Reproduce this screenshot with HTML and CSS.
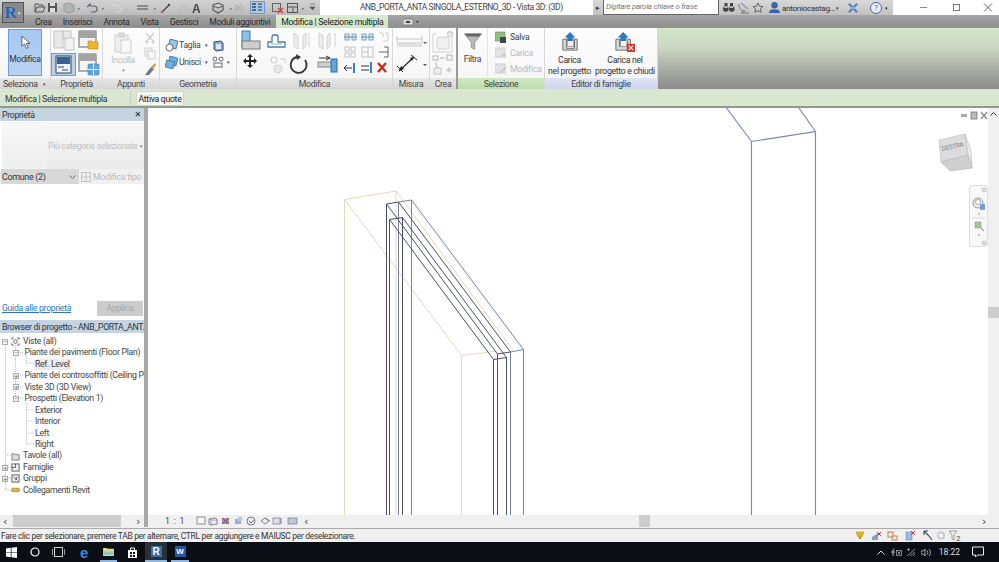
FILE: index.html
```html
<!DOCTYPE html>
<html lang="it">
<head>
<meta charset="utf-8">
<title>Revit</title>
<link rel="stylesheet" href="styles.css">
</head>
<body>
<div class="app">
  <header class="titlebar">
    <div class="qat">
      <button class="appbtn"><span class="appbtn-r">R</span><span class="appbtn-c">▾</span></button>
      <svg class="qat-icons" viewBox="30 0 290 15" width="290" height="15">
        <path d="M35 4h3l1 1h4v2M35 12V4 M35 12l2-5h8l-2 5z" fill="none" stroke="#555" stroke-width="1"/>
        <rect x="48" y="3" width="9" height="9" fill="#555"/><rect x="50" y="3" width="5" height="3" fill="#ddd"/><rect x="50" y="8" width="5" height="4" fill="#ddd"/>
        <path d="M64 4l5-1 5 2v6l-5 2-5-2z" fill="#aeb4b4" stroke="#999"/>
        <path d="M78 8h1.500v1.500h-1.500z" fill="#666"/>
        <path d="M87 7l3-3v2h4a3 3 0 0 1 0 6h-3" fill="none" stroke="#667" stroke-width="1.200"/>
        <path d="M102 8h1.500v1.500h-1.500z" fill="#666"/>
        <path d="M111 7l3-3v2h4a3 3 0 0 1 0 6h-3" fill="none" stroke="#d6d6d6" stroke-width="1.200"/>
        <path d="M126 8h1.500v1.500h-1.500z" fill="#bbb"/>
        <path d="M137 6h11M137 9h11" stroke="#777" stroke-width="1.500"/><path d="M154 8h1.500v1.500h-1.500z" fill="#666"/>
        <path d="M162 12l7-7" stroke="#444" stroke-width="1.300"/><circle cx="162" cy="12" r="1.200" fill="#c55"/><circle cx="169" cy="5" r="1.200" fill="#444"/>
        <path d="M178 12l3-3a3 3 0 1 1 2 2l-3 2z" fill="none" stroke="#b4b4b4"/>
        <text x="192" y="12.500" class="qat-a">A</text>
        <path d="M213 5l5-2 5 2v5l-5 3-5-3z" fill="none" stroke="#555" stroke-width="1.100"/><path d="M213 6l5 2 5-2" fill="none" stroke="#555"/>
        <path d="M230 8h1.500v1.500h-1.500z" fill="#666"/>
        <path d="M236 5l4 3-4 3z M240 4l3 4-3 4" fill="none" stroke="#aaa"/>
        <rect x="250.500" y="1.500" width="14" height="12" fill="#a8c8ec" stroke="#6c9bd4"/>
        <path d="M252 4h4M252 7h4M252 10h4" stroke="#345" stroke-width="1.300"/><path d="M258 4h4M258 7h4M258 10h4" stroke="#567" stroke-width="1.300"/>
        <rect x="272.500" y="3.500" width="8" height="8" fill="none" stroke="#666"/><path d="M278 8l5 5M283 8l-5 5" stroke="#d33" stroke-width="1.400"/>
        <rect x="287.500" y="3.500" width="10" height="9" fill="none" stroke="#555"/><path d="M288 7h10M293 7v5" stroke="#555"/>
        <path d="M302 8h1.500v1.500h-1.500z" fill="#666"/>
        <path d="M310 4h5M310 7l2.500 3 2.500-3z" fill="#555" stroke="#555" stroke-width=".6"/>
      </svg>
    </div>
    <div class="doc-title">ANB_PORTA_ANTA SINGOLA_ESTERNO_3D - Vista 3D: (3D)</div>
    <div class="infocenter">
      <span class="ic-play">▸</span>
      <span class="ic-search">Digitare parola chiave o frase</span>
      <svg viewBox="0 0 46 15" width="46" height="15" class="ic-icons">
        <path d="M3 9a2.800 2.800 0 1 0 5.600 0a2.800 2.800 0 1 0-5.600 0M9 9a2.800 2.800 0 1 0 5.600 0a2.800 2.800 0 1 0-5.600 0M4.500 3h3v5h-3zM10 3h3v5h-3z" fill="#444"/>
        <path d="M19 4a6 6 0 0 0 7 7M21 3l7 6M24 11l-3 2h8" fill="none" stroke="#778" stroke-width="1"/>
        <path d="M38 3l1.500 3.200 3.500.4-2.600 2.300.7 3.500-3.100-1.800-3.100 1.800.7-3.500-2.600-2.300 3.500-.4z" fill="none" stroke="#666"/>
      </svg>
      <svg viewBox="0 0 12 14" width="11" height="13" class="ic-user"><circle cx="6" cy="4.500" r="3.500" fill="#3b64a8"/><path d="M0 13c0-3 2-4 6-4s6 1 6 4z" fill="#3b64a8"/></svg>
      <span class="ic-name">antoniocastag...</span><span class="ic-caret">▾</span>
      <svg viewBox="0 0 12 12" width="10" height="10" class="ic-x"><path d="M1 1l10 10M11 1L1 11" stroke="#5a82b8" stroke-width="2.600"/><path d="M3 6h6" stroke="#9ab8dc" stroke-width="2"/></svg>
      <span class="ic-help">?</span><span class="ic-caret ic-caret-help">▾</span>
    </div>
    <div class="winctl">
      <svg viewBox="0 0 106 15" width="106" height="15">
        <path d="M27 7.500h7" stroke="#888"/><rect x="60.500" y="4.500" width="6" height="6" fill="none" stroke="#777"/>
        <path d="M91 3.500l8 8M99 3.500l-8 8" stroke="#666"/>
      </svg>
    </div>
  </header>

  <nav class="tabs">
    <span class="tab tab-crea">Crea</span>
    <span class="tab">Inserisci</span>
    <span class="tab">Annota</span>
    <span class="tab">Vista</span>
    <span class="tab">Gestisci</span>
    <span class="tab">Moduli aggiuntivi</span>
    <span class="tab-active">Modifica | Selezione multipla</span>
    <svg class="tab-extra" viewBox="0 0 16 8" width="16" height="8"><rect x="0" y="1" width="10" height="6" rx="1" fill="#d8d8d8" stroke="#666" stroke-width=".6"/><rect x="3" y="3" width="4" height="2" fill="#444"/><path d="M13 3h3l-1.500 2z" fill="#333"/></svg>
  </nav>

  <section class="ribbon">
    <div class="panel p-sel">
      <div class="panel-body">
        <button class="big-active">
          <svg viewBox="0 0 12 16" width="11" height="15"><path d="M2 1v11l3-2.500 2 5 2-1-2-4.500h4z" fill="#fff" stroke="#556" stroke-width="1"/></svg>
          <span>Modifica</span>
        </button>
      </div>
      <div class="panel-label label-left">Seleziona <i class="lab-caret">▾</i></div>
    </div>

    <div class="panel p-prop">
      <div class="panel-body">
        <svg viewBox="51 28 52 50" width="52" height="50">
          <g fill="#e8e8e8" stroke="#c4c4c4"><rect x="54" y="31" width="9" height="17"/><rect x="63" y="31" width="8" height="8"/><rect x="65" y="38" width="9" height="12" fill="#f2f2f2"/></g>
          <rect x="79" y="31" width="17" height="16" fill="#f4f4f4" stroke="#666"/><rect x="79" y="31" width="17" height="7" fill="#a4a4a4"/>
          <path d="M88 41h4l1 1h5v7H88z" fill="#f0b32a" stroke="#b88a20" stroke-width=".6"/>
          <rect x="51.500" y="53.500" width="24" height="22" fill="#b5d0ef" stroke="#6f9fd8"/>
          <rect x="56" y="56" width="15" height="17" fill="#eef3f9" stroke="#345"/><rect x="57" y="57" width="13" height="7" fill="#3a5f95"/><path d="M58 67h6M62 70h6" stroke="#345"/>
          <rect x="79" y="54" width="17" height="17" fill="#f4f4f4" stroke="#666"/><rect x="79" y="54" width="17" height="7" fill="#a4a4a4"/>
          <rect x="88" y="64" width="11" height="11" rx="1" fill="#5ea6df" stroke="#3a7cb5" stroke-width=".6"/><path d="M93.500 64v11M88 69.500h11" stroke="#fff"/>
        </svg>
      </div>
      <div class="panel-label">Proprietà</div>
    </div>

    <div class="panel p-app">
      <div class="panel-body p-app-body">
        <div class="paste">
          <svg viewBox="0 0 18 22" width="18" height="22"><rect x="1" y="3" width="13" height="17" fill="#eee" stroke="#d0d0d0"/><rect x="5" y="1" width="5" height="4" fill="#ddd" stroke="#d0d0d0"/><rect x="7" y="8" width="10" height="13" fill="#f8f8f8" stroke="#d0d0d0"/></svg>
          <span>Incolla</span>
          <i class="caret-dim">▾</i>
        </div>
        <svg class="app-small" viewBox="0 0 12 44" width="12" height="44">
          <path d="M2 1l8 9M10 1L2 10" stroke="#ccc" stroke-width="1.400"/><circle cx="3" cy="10" r="1.500" fill="#d0d0d0"/><circle cx="9" cy="10" r="1.500" fill="#d0d0d0"/>
          <rect x="1" y="16" width="7" height="8" fill="#eee" stroke="#d0d0d0"/><rect x="4" y="19" width="7" height="8" fill="#f6f6f6" stroke="#d0d0d0"/>
          <path d="M1 43l6-8 3 2-5 6z" fill="#778"/><path d="M7 35l4-4 1 2-3 4z" fill="#c9a23f"/>
        </svg>
      </div>
      <div class="panel-label">Appunti</div>
    </div>

    <div class="panel p-geo">
      <div class="panel-body geo-body">
        <div class="geo-row">
          <svg viewBox="0 0 13 13" width="13" height="13"><rect x="4" y="1" width="8" height="8" fill="#9cc4e6" stroke="#4c7fa8" transform="rotate(15 8 5)"/><circle cx="4.500" cy="8.500" r="3.500" fill="#fff" stroke="#666"/></svg>
          <span>Taglia</span><i class="geo-caret">▾</i>
          <svg class="geo-ic" viewBox="0 0 12 12" width="12" height="12"><path d="M2 2l7-1 2 2v7l-7 1-2-2z" fill="#7fb0de" stroke="#446"/><path d="M4 4h5v5H4z" fill="#dce9f6"/></svg>
        </div>
        <div class="geo-row">
          <svg viewBox="0 0 13 13" width="13" height="13"><rect x="4" y="1" width="8" height="8" fill="#6fb0e2" stroke="#4c7fa8" transform="rotate(15 8 5)"/><rect x="1" y="5" width="8" height="7" fill="#6fb0e2" stroke="#4c7fa8" transform="rotate(15 5 8)"/></svg>
          <span>Unisci</span><i class="geo-caret">▾</i>
          <svg class="geo-ic" viewBox="0 0 12 12" width="12" height="12"><circle cx="3" cy="3" r="2" fill="none" stroke="#666"/><circle cx="9" cy="3" r="2" fill="none" stroke="#666"/><rect x="2" y="7" width="8" height="4" fill="none" stroke="#666"/></svg>
          <i class="geo-caret">▾</i>
        </div>
      </div>
      <div class="panel-label">Geometria</div>
    </div>

    <div class="panel p-mod">
      <div class="panel-body">
        <svg viewBox="237 28 156 50" width="156" height="50">
          <rect x="242" y="31" width="8" height="16" fill="#8fc0e8" stroke="#3c7fb5"/><rect x="242" y="41" width="18" height="8" fill="#cfcfcf" stroke="#777"/>
          <path d="M268 47v-5h4v-5c0-3 6-3 6 0v5h7v5z" fill="#fff" stroke="#4c7fa8" stroke-width="1.300"/><path d="M271 44h11" stroke="#aaa"/>
          <path d="M294 33l4 3v13l-4-3zM306 33l-3 3v13l3-3zM309 33v14" fill="#eee" stroke="#d0d0d0"/>
          <path d="M319 33l4 3v13l-4-3zM330 33l-3 3v13l3-3z" fill="#eee" stroke="#d0d0d0"/><path d="M335 33v14" stroke="#d0d0d0"/>
          <path d="M250 54l3 3h-2v3h3v-2l3 3-3 3v-2h-3v3h2l-3 3-3-3h2v-3h-3v2l-3-3 3-3v2h3v-3h-2z" fill="#222"/>
          <circle cx="274" cy="60" r="3" fill="none" stroke="#d0d0d0" stroke-width="1.200"/><circle cx="278" cy="69" r="4" fill="#e8e8e8" stroke="#d0d0d0"/><path d="M280 59h5v4" fill="none" stroke="#d0d0d0"/>
          <path d="M297 57a8 8 0 1 0 8 3" fill="none" stroke="#333" stroke-width="1.800"/><path d="M296 54l5 3-4 3z" fill="#333"/>
          <rect x="318" y="62" width="16" height="5" fill="#cfcfcf" stroke="#888"/><rect x="331" y="59" width="6" height="13" fill="#5fa4dc" stroke="#2f6da3"/><path d="M319 58h11M326 56l4 2-4 2" fill="none" stroke="#333"/>
          <g fill="#dce8f3" stroke="#5f96c4" stroke-width=".8"><rect x="345" y="34" width="4" height="6"/><rect x="352" y="34" width="4" height="6"/><rect x="362" y="34" width="4" height="6"/><rect x="369" y="34" width="4" height="6"/></g>
          <path d="M344 37h13M361 37h13" stroke="#578" stroke-width=".8"/>
          <path d="M379 33h4v4M385 33h3v8h-5" fill="none" stroke="#ccc"/>
          <g fill="none" stroke="#c4c4c4"><rect x="345" y="47" width="4" height="4"/><rect x="351" y="47" width="4" height="4"/><rect x="345" y="53" width="4" height="4"/><rect x="351" y="53" width="4" height="4"/><rect x="362" y="47" width="11" height="10"/><path d="M368 47v10M362 52h6"/></g>
          <path d="M379 52h9M384 47h4v10h-4" fill="none" stroke="#666"/>
          <path d="M345 68h7M347 65l-3 3 3 3" fill="none" stroke="#334"/><rect x="353" y="63" width="2" height="10" fill="#3c7fb5"/>
          <path d="M361 66h8M361 70h8" fill="none" stroke="#334"/><rect x="370" y="62" width="2" height="11" fill="#3c7fb5"/>
          <path d="M378 63l8 9M386 63l-8 9" stroke="#cf2a20" stroke-width="2.400"/>
        </svg>
      </div>
      <div class="panel-label">Modifica</div>
    </div>

    <div class="panel p-mis">
      <div class="panel-body">
        <svg viewBox="393 28 37 50" width="37" height="50">
          <path d="M397 39h25M397 36v6M422 36v6" stroke="#c4c4c4" fill="none"/><rect x="397" y="42" width="25" height="5" fill="#e0e0e0"/>
          <path d="M423 42h4l-2 2z" fill="#555"/>
          <path d="M399 71l15-14" stroke="#222" stroke-width="1.200"/><path d="M399 71l2-5 3 3zM414 57l-4 1 2 3z" fill="#222"/><path d="M397 66l6 6M411 55l6 5" stroke="#222"/>
          <path d="M423 64h4l-2 2z" fill="#555"/>
        </svg>
      </div>
      <div class="panel-label">Misura</div>
    </div>

    <div class="panel p-crea">
      <div class="panel-body">
        <svg viewBox="430 28 28 50" width="28" height="50">
          <path d="M436 34h-3v18h3M447 33h5v19h-16" fill="none" stroke="#dcdcdc" stroke-width="1.300"/><rect x="437" y="37" width="12" height="12" rx="2" fill="#f0f0f0" stroke="#d4d4d4"/><circle cx="450" cy="34" r="2.500" fill="none" stroke="#c4c4c4"/>
          <rect x="433" y="56" width="5" height="4" fill="none" stroke="#b4b4b4"/><path d="M440 58h5" stroke="#b4b4b4"/><rect x="447" y="55" width="5" height="5" fill="none" stroke="#b4b4b4"/><path d="M436 62v4l3 2" fill="none" stroke="#b4b4b4"/><rect x="434" y="68" width="7" height="6" fill="#eee" stroke="#c4c4c4"/><path d="M449 67l3 3-3 3-3-3z" fill="#d0d0d0"/>
        </svg>
      </div>
      <div class="panel-label">Crea</div>
    </div>

    <div class="panel p-filt">
      <div class="panel-body filt-body">
        <div class="filter-btn">
          <svg viewBox="0 0 20 20" width="18" height="17"><path d="M0 1h20L12 11v8l-4-2v-6z" fill="#b9b9b9" stroke="#888"/><path d="M0 1h20l-3 3H3z" fill="#666"/></svg>
          <span>Filtra</span>
        </div>
        <div class="sel-list">
          <div class="sel-item"><svg viewBox="0 0 12 12" width="12" height="12"><rect x="0" y="1" width="10" height="9" fill="#8fc083" stroke="#777" stroke-width=".6"/><rect x="5" y="6" width="6" height="6" fill="#444"/></svg><span>Salva</span></div>
          <div class="sel-item dim"><svg viewBox="0 0 12 12" width="12" height="12"><rect x="0" y="1" width="10" height="9" fill="#e2e2e2" stroke="#d0d0d0"/><path d="M6 8h5M9 6v5" stroke="#c4c4c4"/></svg><span>Carica</span></div>
          <div class="sel-item dim"><svg viewBox="0 0 12 12" width="12" height="12"><rect x="0" y="1" width="10" height="9" fill="#e2e2e2" stroke="#d0d0d0"/><path d="M5 10l6-6" stroke="#c4c4c4" stroke-width="1.500"/></svg><span>Modifica</span></div>
        </div>
      </div>
      <div class="panel-label label-green">Selezione</div>
    </div>

    <div class="panel p-edit">
      <div class="panel-body edit-body">
        <div class="load-btn load-1">
          <svg viewBox="0 0 20 22" width="18" height="20"><path d="M2 8h4v10h9V8h3v12H2z" fill="#d9d9d9" stroke="#666"/><rect x="7" y="7" width="7" height="9" fill="#f2f2f2" stroke="#999"/><path d="M10 0l6 6h-3v4H7V6H4z" fill="#2c78c4"/></svg>
          <span>Carica<br>nel progetto</span>
        </div>
        <div class="load-btn load-2">
          <svg viewBox="0 0 24 22" width="22" height="20"><path d="M2 8h4v8h9V8h3v12H2z" fill="#d9d9d9" stroke="#666"/><rect x="7" y="7" width="7" height="9" fill="#f2f2f2" stroke="#999"/><path d="M10 0l6 6h-3v4H7V6H4z" fill="#2c78c4"/><rect x="14" y="13" width="9" height="9" fill="#d9352a"/><path d="M16 15l5 5M21 15l-5 5" stroke="#fff" stroke-width="1.200"/></svg>
          <span>Carica nel<br>progetto e chiudi</span>
        </div>
      </div>
      <div class="panel-label label-blue">Editor di famiglie</div>
    </div>
    <div class="ribbon-rest"></div>
  </section>

  <div class="optbar">
    <span class="opt-title">Modifica | Selezione multipla</span>
    <span class="opt-btn">Attiva quote</span>
  </div>

  <main class="main">
    <aside class="side">
      <div class="side-head"><span>Proprietà</span><b class="close">✕</b></div>
      <div class="type-sel">
        <div class="type-preview"></div>
        <div class="type-name"><span>Più categorie selezionate</span><i>▾</i></div>
      </div>
      <div class="type-row">
        <div class="combo"><span>Comune (2)</span><svg viewBox="0 0 7 4" width="7" height="4"><path d="M.5.5L3.500 3.500 6.500.5" fill="none" stroke="#666"/></svg></div>
        <div class="edit-type"><svg viewBox="0 0 10 10" width="10" height="10"><rect x=".5" y=".5" width="9" height="9" fill="none" stroke="#c4c4c4"/><path d="M.5 5h9M5 .5v9" stroke="#c4c4c4"/></svg><span>Modifica tipo</span></div>
      </div>
      <div class="prop-body"></div>
      <div class="prop-foot"><a class="prop-link">Guida alle proprietà</a><span class="apply">Applica</span></div>
      <div class="side-head browser-head"><span>Browser di progetto - ANB_PORTA_ANT...</span><b class="close">✕</b></div>
      <div class="tree">
        <svg class="tree-lines" viewBox="0 0 144 181" width="144" height="181">
          <g stroke="#bbb" stroke-dasharray="1 1" fill="none">
            <path d="M5.500 10v146M15.500 11v54M26.500 22v7M26.500 29h8M26.500 69v41M26.500 76h8M26.500 87h8M26.500 99h8M26.500 110h8"/>
            <path d="M18 18.500h5M18 41h5M18 53h5M18 64h5M5 121h5M8 133h3M8 144h3M5 156h5"/>
          </g>
        </svg>
        <div class="row lv0"><i class="exp">−</i><svg class="ti" viewBox="0 0 10 10" width="9" height="9"><path d="M1 3V1h2M7 1h2v2M9 7v2H7M3 9H1V7" fill="none" stroke="#555"/><circle cx="5" cy="5" r="2" fill="none" stroke="#557"/></svg><span>Viste (all)</span></div>
        <div class="row lv1"><i class="exp">−</i><span>Piante dei pavimenti (Floor Plan)</span></div>
        <div class="row lv2"><span class="hl">Ref. Level</span></div>
        <div class="row lv1"><i class="exp">+</i><span class="clip">Piante dei controsoffitti (Ceiling Plan)</span></div>
        <div class="row lv1"><i class="exp">+</i><span>Viste 3D (3D View)</span></div>
        <div class="row lv1"><i class="exp">−</i><span>Prospetti (Elevation 1)</span></div>
        <div class="row lv2"><span>Exterior</span></div>
        <div class="row lv2"><span>Interior</span></div>
        <div class="row lv2"><span>Left</span></div>
        <div class="row lv2"><span>Right</span></div>
        <div class="row lv0"><i class="exp none"></i><svg class="ti" viewBox="0 0 10 10" width="9" height="9"><path d="M1 2h3l1 1h4v6H1z" fill="#ddd" stroke="#778"/></svg><span>Tavole (all)</span></div>
        <div class="row lv0"><i class="exp">+</i><svg class="ti" viewBox="0 0 10 10" width="9" height="9"><rect x="1" y="1" width="8" height="8" fill="#eee" stroke="#556"/><path d="M1 5h4V1" fill="none" stroke="#556"/></svg><span>Famiglie</span></div>
        <div class="row lv0"><i class="exp">+</i><svg class="ti" viewBox="0 0 10 10" width="9" height="9"><rect x="1" y="1" width="8" height="8" fill="#eee" stroke="#556"/><path d="M3 3l4 4M7 3L5 7" fill="none" stroke="#556"/></svg><span>Gruppi</span></div>
        <div class="row lv0"><i class="exp none"></i><svg class="ti" viewBox="0 0 10 6" width="9" height="6"><rect x=".5" y="1" width="9" height="4" rx="2" fill="#dfb63a" stroke="#927516" stroke-width=".7"/></svg><span>Collegamenti Revit</span></div>
      </div>
      <div class="side-scroll"><i class="arrow">‹</i><div class="thumb"></div><i class="arrow">›</i></div>
    </aside>

    <section class="view">
      <div class="canvas">
        <svg class="drawing" viewBox="148 108 840 407" width="840" height="407">
          <g fill="none" stroke="#e8d9bd" stroke-width="1">
            <path d="M344.500 515V199.500L396 191M344.500 199.500L461.500 355.500V515M461.500 355.500L497 351M396 191V515M396 191L513 350"/>
          </g>
          <g fill="none" stroke="#7487a8" stroke-width="1">
            <path d="M411.500 200L523.500 349.500V515M411.500 200V515M398.500 202L411.500 200M510.500 352L523.500 349.500M510.500 352V515M398.500 202V515"/>
          </g>
          <g fill="none" stroke="#4b4f5e" stroke-width="1">
            <path d="M386.500 204L398.500 202L510.500 352L497.500 354L386.500 204M386.500 204V515M497.500 354V515"/>
            <path d="M389.500 219.500L402.500 217.500L506.500 357.500L493.500 359.500L389.500 219.500M389.500 219.500V515M402.500 217.500V515M493.500 359.500V515M506.500 357.500V515"/>
          </g>
          <g fill="none" stroke="#7487a8" stroke-width="1.100">
            <path d="M726.500 108L751.500 141.500L815.500 131.500L799 108M751.500 141.500V515M815.500 131.500V515"/>
          </g>
        </svg>
        <svg class="view-ctl" viewBox="0 0 28 10" width="28" height="10"><rect x="0" y="3" width="6" height="3" fill="#aaa"/><rect x="10" y="1" width="6" height="7" fill="#bbb" stroke="#777" stroke-width=".8"/><path d="M20 1l6 7M26 1l-6 7" stroke="#888" stroke-width="1.200"/></svg>
        <svg class="cube" viewBox="0 0 36 40" width="36" height="40">
          <path d="M1 7L27 1 30 22 3 29z" fill="#dcdcdc" stroke="#c4c4c4" stroke-width=".7"/>
          <path d="M27 1L33 18 34 35 30 22z" fill="#ebebeb" stroke="#bbb" stroke-width=".7"/>
          <path d="M3 29L30 22 34 35 12 38z" fill="#cfcfcf" stroke="#bbb" stroke-width=".7"/>
          <text x="4" y="18" class="cube-t" transform="rotate(-12 4 18)">DESTRA</text>
        </svg>
        <div class="navbar">
          <svg viewBox="0 0 18 60" width="18" height="60">
            <circle cx="14" cy="4" r="2" fill="#e2e2e2" stroke="#aaa" stroke-width=".6"/>
            <circle cx="8" cy="17" r="5" fill="#eee" stroke="#999"/><circle cx="8" cy="16" r="2.500" fill="#fff" stroke="#888" stroke-width=".7"/><rect x="10" y="18" width="5" height="6" rx="1" fill="#6f9fdc"/>
            <circle cx="9" cy="28" r=".8" fill="#777"/><path d="M2 32h14" stroke="#ddd"/>
            <rect x="5" y="36" width="6" height="6" fill="#a9c59a" stroke="#888" stroke-width=".5"/><path d="M11 42l3 3" stroke="#777"/>
            <circle cx="9" cy="49" r=".8" fill="#777"/>
            <circle cx="14" cy="57" r="2" fill="#e2e2e2" stroke="#aaa" stroke-width=".6"/>
          </svg>
        </div>
        <div class="vscroll"><svg class="v-up" viewBox="0 0 7 4" width="7" height="4"><path d="M.5 3.500L3.500 .5l3 3" fill="none" stroke="#333"/></svg><div class="v-thumb"></div></div>
      </div>
      <div class="viewbar">
        <span class="scale">1 : 1</span>
        <svg viewBox="0 0 104 10" width="104" height="10" class="vb-icons">
          <rect x="1" y="1" width="8" height="7" fill="#f6f6f6" stroke="#778" stroke-width=".8"/>
          <path d="M13 3l6-1 2 1v5l-6 1-2-1z" fill="none" stroke="#778" stroke-width=".9"/><path d="M13 3l2 1h6M15 4v5" fill="none" stroke="#778" stroke-width=".6"/>
          <path d="M26 2h7v6h-7z" fill="#7d9cc4"/><path d="M26 2l7 6M33 2l-7 6" stroke="#c33"/>
          <path d="M39 3h6v5h-6z" fill="#8fb0d6"/><circle cx="44" cy="3" r="2.500" fill="#bcd"/>
          <circle cx="55" cy="5" r="4" fill="none" stroke="#778"/><path d="M53 5l2 2 3-3" stroke="#667" fill="none"/>
          <path d="M65 5l4-3 4 3-4 3zM69 2l5 3" fill="none" stroke="#778" stroke-width=".9"/>
          <rect x="77" y="2" width="7" height="6" fill="#dde" stroke="#778" stroke-width=".7"/><path d="M85 2v6" stroke="#778"/>
          <rect x="92" y="2" width="9" height="6" fill="#bcc9d8" stroke="#778" stroke-width=".7"/>
        </svg>
        <i class="arrow vb-left">‹</i>
        <div class="vb-track"><div class="vb-thumb"></div></div>
        <i class="arrow vb-right">›</i>
      </div>
    </section>
  </main>

  <footer class="status">
    <span>Fare clic per selezionare, premere TAB per alternare, CTRL per aggiungere e MAIUSC per deselezionare.</span>
    <svg viewBox="0 0 106 11" width="106" height="11">
      <path d="M1 2h8L7 7H3z" fill="#e0b52e" stroke="#b58c1f" stroke-width=".5"/><path d="M4 7h2v2H4z" fill="#b58c1f"/>
      <path d="M17 7l6-4v7h-6z" fill="#7fa4cf"/><path d="M22 2l4 4M26 2l-4 4" stroke="#c33"/>
      <rect x="33" y="2" width="5" height="5" fill="none" stroke="#c87f4a"/><rect x="37" y="6" width="5" height="4" fill="none" stroke="#c87f4a"/>
      <rect x="51" y="2" width="6" height="8" fill="#9dbbe0" stroke="#5a7fab" stroke-width=".5"/><path d="M56 1l4 4M60 1l-4 4" stroke="#c33"/>
      <path d="M69 1l5 5M69 1v4M69 1h4M74 6l3 4" fill="none" stroke="#445" stroke-width="1.100"/>
      <circle cx="86" cy="5.500" r="3.200" fill="none" stroke="#c4c4c4" stroke-width="1.500"/>
      <path d="M94 1h8l-3 4v5l-2-1V5z" fill="#eee" stroke="#889" stroke-width=".8"/>
      <text x="101" y="10.500" class="st-n">2</text>
    </svg>
  </footer>

  <div class="taskbar">
    <div class="tb-left">
      <svg class="tb-ic tb-win" viewBox="0 0 11 11" width="11" height="11"><path d="M0 1.500l4.800-.7v4.400H0zM5.500.7L11 0v5.200H5.500zM0 5.800h4.800v4.400L0 9.500zM5.500 5.800H11V11l-5.500-.8z" fill="#fff"/></svg>
      <svg class="tb-ic tb-circle" viewBox="0 0 10 10" width="10" height="10"><circle cx="5" cy="5" r="4" fill="none" stroke="#fff" stroke-width="1.200"/></svg>
      <svg class="tb-ic tb-view" viewBox="0 0 13 10" width="13" height="10"><rect x="2.500" y=".5" width="8" height="9" fill="none" stroke="#ccc"/><path d="M.5 2v6M12.500 2v6" stroke="#999"/></svg>
      <span class="tb-e">e</span>
      <div class="tb-app tb-open tb-folder"><svg viewBox="0 0 12 10" width="11" height="9"><path d="M0 1h4l1 1h7v8H0z" fill="#e8d78a"/><rect x="1" y="5" width="10" height="4" fill="#8cc7b8"/></svg></div>
      <svg class="tb-ic tb-store" viewBox="0 0 11 11" width="11" height="11"><path d="M1 3h9v8H1z" fill="#fff"/><path d="M3.500 3V1h4v2" fill="none" stroke="#fff"/><rect x="3" y="5" width="2" height="2" fill="#111"/><rect x="6" y="5" width="2" height="2" fill="#111"/><rect x="3" y="8" width="2" height="2" fill="#111"/><rect x="6" y="8" width="2" height="2" fill="#111"/></svg>
      <div class="tb-app tb-open tb-rev"><span>R</span></div>
      <div class="tb-app tb-open tb-word"><span>W</span></div>
    </div>
    <div class="tray">
      <svg viewBox="0 0 8 5" width="8" height="5"><path d="M.5 4.500L4 1l3.500 3.500" fill="none" stroke="#ddd"/></svg>
      <svg viewBox="0 0 12 9" width="12" height="9"><path d="M3 8V2q0-1 1.500-1M1 4h4" fill="none" stroke="#ccc" stroke-width=".9"/><rect x="6.500" y="2.500" width="5" height="5" fill="none" stroke="#aaa" stroke-width=".7"/><path d="M7.500 3.500l3 3M10.500 3.500l-3 3" stroke="#ccc" stroke-width=".7"/></svg>
      <svg viewBox="0 0 9 9" width="9" height="9"><path d="M0 8L8 1M3 8l5-4M6 8l2-2" stroke="#888"/><circle cx="1.500" cy="1.500" r="1" fill="#ddd"/></svg>
      <svg viewBox="0 0 11 9" width="11" height="9"><path d="M0 3h2l2-2v7L2 6H0z" fill="none" stroke="#ccc" stroke-width=".8"/><path d="M6 2.500a3 3 0 0 1 0 4M8 1a5 5 0 0 1 0 7" fill="none" stroke="#ccc" stroke-width=".8"/></svg>
      <span class="clock">18:22</span>
      <svg class="notif" viewBox="0 0 12 12" width="12" height="12"><path d="M.5 1h11v8h-6l-2 2V9h-3z" fill="none" stroke="#eee"/></svg>
    </div>
  </div>
</div>
</body>
</html>
```

FILE: styles.css
```css
* { box-sizing: border-box; }
html, body { margin: 0; padding: 0; width: 999px; height: 562px; overflow: hidden; }
body { font-family: Roboto, "Noto Sans", sans-serif; font-size: 8.7px; letter-spacing: -.3px; color: #333; background: #fff; }
i { font-style: normal; }
svg { display: block; flex: none; }
button { font: inherit; letter-spacing: inherit; color: inherit; padding: 0; margin: 0; border: 0; background: none; }
.app { display: flex; flex-direction: column; width: 999px; height: 562px; filter: blur(.3px); }

/* title bar */
.titlebar { display: flex; height: 15px; flex: none; }
.qat { width: 320px; height: 15px; background: linear-gradient(#d2d2d2, #bcbcbc); display: flex; position: relative; }
.appbtn { position: absolute; left: 2px; top: 2px; width: 22px; height: 21px; background: #8a8a8a; border: 1px solid #555; display: flex; align-items: center; z-index: 2; }
.appbtn-r { color: #1f63b0; font: bold 17px/19px "Liberation Serif", serif; width: 15px; text-align: center; text-shadow: 0 0 1px #9fc6ea; }
.appbtn-c { color: #eee; font-size: 5px; }
.qat-icons { margin-left: 30px; }
.qat-a { font: bold 12px "Liberation Sans", sans-serif; fill: #444; }
.doc-title { width: 273px; background: #fff; font-size: 8.5px; letter-spacing: -.42px; line-height: 14px; padding-left: 40px; white-space: nowrap; color: #444; }
.infocenter { width: 300px; flex: none; display: flex; align-items: center; background: linear-gradient(#d8d8d8, #c2c2c2); }
.infocenter > * { flex: none; }
.ic-play { width: 10px; font-size: 7px; text-align: center; color: #333; }
.ic-search { width: 116px; height: 15px; background: #fff; border: 1px solid #666; border-top: 0; font-style: italic; font-size: 7.8px; letter-spacing: -.22px; line-height: 13px; padding-left: 2px; color: #777; white-space: nowrap; overflow: hidden; }
.ic-icons { margin-left: 1px; }
.ic-user { margin-left: 3px; }
.ic-name { margin-left: 2px; width: 53px; font-size: 8.1px; color: #333; white-space: nowrap; overflow: hidden; }
.ic-caret { font-size: 5px; margin-left: 1px; width: 5px; }
.ic-x { margin-left: 7px; }
.ic-help { margin-left: 12px; width: 12px; height: 12px; border: 1px solid #3c6cb0; border-radius: 50%; color: #3c6cb0; font-size: 8px; line-height: 10px; text-align: center; background: #eef; }
.ic-caret-help { margin-left: 3px; }
.winctl { width: 106px; background: #fff; }

/* tabs */
.tabs { height: 13px; flex: none; background: linear-gradient(#a6a6a6, #8f8f8f 90%, #999); display: flex; align-items: flex-start; padding-left: 35px; line-height: 14px; }
.tab { margin-right: 11px; color: #2a2a2a; white-space: nowrap; }
.tab-active { margin-left: -5px; width: 112px; height: 13px; background: linear-gradient(#dcecd2, #cfe6c2); color: #222; text-align: center; white-space: nowrap; line-height: 14px; }
.tab-extra { margin: 3px 0 0 15px; }

/* ribbon */
.ribbon { height: 61px; flex: none; display: flex; background: linear-gradient(#d2e6c8, #ccd8c4 30%, #8e8e8e 96%); }
.panel { display: flex; flex-direction: column; flex: none; border-right: 1px solid #d8d8d8; background: #fff; }
.panel-body { height: 50px; background: linear-gradient(#fdfdfd, #f6f6f6); flex: none; }
.panel-label { height: 11px; flex: none; background: linear-gradient(#e6e6e6, #d6d6d6); text-align: center; line-height: 12px; color: #444; white-space: nowrap; }
.label-left { text-align: left; padding-left: 3px; }
.lab-caret { font-size: 5px; margin-left: 3px; vertical-align: 1px; }
.label-green { background: linear-gradient(#d0e8c2, #bfdcae); }
.label-blue { background: linear-gradient(#e0e4f4, #d0d6ec); }
.p-sel { width: 51px; }
.p-prop { width: 52px; }
.p-app { width: 57px; }
.p-geo { width: 77px; }
.p-mod { width: 156px; }
.p-mis { width: 37px; }
.p-crea { width: 28px; border-right: 2px solid #999; }
.p-filt { width: 87px; }
.p-edit { width: 113px; }
.ribbon-rest { flex: 1; }
.big-active { margin: 1px 0 0 8px; width: 34px; height: 47px; background: linear-gradient(#a5c8f0, #b9d3f2); border: 1px solid #6f9fd8; display: flex; flex-direction: column; align-items: center; color: #333; padding-top: 5px; gap: 4px; line-height: 10px; }
.p-app-body { display: flex; }
.paste { width: 38px; margin-left: 1px; display: flex; flex-direction: column; align-items: center; padding-top: 4px; color: #bdbdbd; line-height: 11px; gap: 1px; }
.caret-dim { font-size: 5px; line-height: 6px; color: #888; }
.app-small { margin: 4px 0 0 2px; }
.geo-body { display: flex; flex-direction: column; padding: 11px 0 0 5px; gap: 3.5px; }
.geo-row { display: flex; align-items: center; gap: 1px; height: 13px; line-height: 13px; color: #444; }
.geo-row span { width: 23px; }
.geo-caret { font-size: 5px; width: 6px; text-align: center; }
.geo-ic { margin-left: 2px; }
.filt-body { display: flex; }
.filter-btn { width: 30px; display: flex; flex-direction: column; align-items: center; padding-top: 5px; gap: 4px; line-height: 11px; color: #444; border-right: 1px solid #e4e4e4; height: 48px; }
.sel-list { display: flex; flex-direction: column; padding: 3px 0 0 7px; gap: 4px; }
.sel-item { display: flex; align-items: center; gap: 3px; height: 12px; color: #444; }
.sel-item.dim { color: #bbb; }
.edit-body { display: flex; }
.load-btn { display: flex; flex-direction: column; align-items: center; text-align: center; line-height: 10.5px; padding-top: 4px; gap: 3px; color: #333; white-space: nowrap; }
.load-1 { width: 49px; }
.load-2 { width: 62px; }

/* options bar */
.optbar { height: 19px; flex: none; background: #d9e6d0; display: flex; align-items: flex-start; border-bottom: 2px solid #8f9a88; padding-top: 1px; }
.opt-title { width: 131px; padding-left: 5px; height: 16px; line-height: 18px; border-right: 1px solid #c4ceb9; white-space: nowrap; color: #333; }
.opt-btn { margin: 1px 0 0 5px; width: 48px; height: 15px; line-height: 14px; text-align: center; background: #f4f6f2; border: 1px solid #d0d8c8; white-space: nowrap; color: #222; }

/* main */
.main { flex: 1; display: flex; min-height: 0; background: #f0f0f0; padding-bottom: 1px; }
.side { width: 144px; flex: none; display: flex; flex-direction: column; background: #fff; }
.side-head { height: 13px; flex: none; display: flex; justify-content: space-between; padding: 0 3px 0 2px; background: #c6d3e1; line-height: 14px; color: #333; white-space: nowrap; }
.close { font: bold 8px/13px "DejaVu Sans", sans-serif; color: #222; }
.type-sel { height: 48px; flex: none; display: flex; padding-top: 1px; background: #fff; }
.type-preview { width: 44px; margin-left: 2px; background: linear-gradient(#f8f8f8, #eeeeee); border: 1px solid #f2f2f2; }
.type-name { flex: 1; background: linear-gradient(#f8f8f8, #eaeaea); color: #c0c0c0; display: flex; justify-content: space-between; align-items: center; padding: 0 1px 0 2px; white-space: nowrap; }
.type-name i { font-size: 5px; color: #777; }
.type-row { height: 15px; flex: none; display: flex; background: #f1f1f1; }
.combo { width: 78px; margin-left: 1px; background: #d8d8d8; display: flex; justify-content: space-between; align-items: center; padding: 0 3px 0 1px; color: #333; font-size: 8.9px; }
.edit-type { display: flex; align-items: center; gap: 2px; margin-left: 2px; color: #bbb; font-size: 8.9px; white-space: nowrap; }
.prop-body { flex: 1; background: #fff; }
.prop-foot { height: 16px; flex: none; display: flex; justify-content: space-between; margin-bottom: 4px; padding: 0 1px 0 2px; align-items: center; }
.prop-link { color: #2f75b5; text-decoration: underline; white-space: nowrap; }
.apply { width: 46px; height: 15px; background: #ccc; color: #a8a8a8; line-height: 15px; text-align: center; }
.tree { height: 182px; flex: none; position: relative; padding-top: 3px; overflow: hidden; background: #fff; }
.tree-lines { position: absolute; left: 0; top: 1px; }
.row { height: 11.45px; line-height: 11.45px; display: flex; align-items: center; white-space: nowrap; position: relative; color: #444; }
.lv0 { padding-left: 2px; }
.lv1 { padding-left: 13px; }
.lv2 { padding-left: 35px; }
.exp { width: 6px; height: 6px; border: 1px solid #aaa; background: #f2f2f2; font-size: 6px; line-height: 4px; text-align: center; color: #555; flex: none; }
.exp.none { border: 0; background: none; }
.ti { margin: 0 3px 0 3px; }
.lv1 .exp { margin-right: 5.500px; }
.hl { background: #ececec; padding: 0 1px; margin-left: -1px; }
.clip { width: 120px; overflow: hidden; }
.side-scroll { height: 12px; flex: none; display: flex; align-items: center; background: #f0f0f0; padding: 0 4px 0 3px; }
.side-scroll .thumb { width: 108px; height: 12px; background: #cdcdcd; margin: 0 auto 0 6px; }
.arrow { font-size: 11px; line-height: 11px; color: #444; font-family: "DejaVu Sans", sans-serif; }

/* view */
.view { flex: 1; display: flex; flex-direction: column; border-left: 4px solid #a8a8a8; min-width: 0; }
.canvas { height: 407px; flex: none; position: relative; background: #fff; display: flex; }
.drawing { flex: none; }
.vscroll { width: 11px; flex: none; background: #f0f0f0; position: relative; }
.v-up { position: absolute; left: 2px; top: 4px; }
.v-thumb { position: absolute; left: 0; top: 199px; width: 11px; height: 11px; background: #cdcdcd; }
.view-ctl { position: absolute; left: 813px; top: 3px; }
.cube { position: absolute; left: 790px; top: 25px; }
.cube-t { font: 6.5px Roboto, sans-serif; fill: #888; }
.st-n { font: 8px Roboto, sans-serif; fill: #555; }
.navbar { position: absolute; left: 821px; top: 77px; width: 19px; height: 62px; border: 1px solid #ddd; border-radius: 3px; background: #f8f8f8; }
.viewbar { height: 12px; flex: none; background: #f0f0f0; display: flex; align-items: center; padding-left: 17px; }
.scale { width: 31px; letter-spacing: .8px; white-space: nowrap; color: #444; }
.vb-icons { margin-right: 2px; }
.vb-left { width: 8px; margin-left: 2px; }
.vb-track { width: 670px; height: 12px; padding-left: 327px; }
.vb-thumb { width: 11px; height: 12px; background: #cdcdcd; }

/* status */
.status { height: 14px; flex: none; background: #f0f0f0; border-top: 1px solid #aaa; display: flex; justify-content: space-between; align-items: center; padding: 0 38px 0 1px; color: #333; white-space: nowrap; font-size: 8.5px; letter-spacing: -.33px; }

/* taskbar */
.taskbar { height: 20px; flex: none; background: #0b0e14; display: flex; justify-content: space-between; align-items: center; color: #ddd; }
.tb-left { display: flex; align-items: center; height: 20px; }
.tb-ic { flex: none; }
.tb-win { margin-left: 6px; }
.tb-circle { margin-left: 13px; }
.tb-view { margin-left: 12px; }
.tb-e { width: 12px; margin-left: 13px; color: #2d8fe6; font: bold 15px/15px "Liberation Sans", sans-serif; text-align: center; }
.tb-app { height: 20px; display: flex; align-items: center; justify-content: center; }
.tb-open { border-bottom: 2px solid #8fb6dc; }
.tb-folder { width: 17px; margin-left: 10px; }
.tb-store { margin-left: 10px; }
.tb-rev { width: 22px; margin-left: 7px; background: #2b2f38; }
.tb-rev span { width: 11px; height: 11px; background: #3a6ea8; color: #fff; font: bold 10px/11px "Liberation Sans", sans-serif; text-align: center; }
.tb-word { width: 18px; margin-left: 4px; }
.tb-word span { width: 11px; height: 11px; background: #2a5699; color: #fff; font: bold 8px/11px "Liberation Sans", sans-serif; text-align: center; }
.tray { display: flex; align-items: center; padding-right: 15px; gap: 5px; }
.clock { margin-left: 2px; font-size: 8.5px; letter-spacing: 0; color: #ddd; }
.notif { margin-left: 7px; }
```
